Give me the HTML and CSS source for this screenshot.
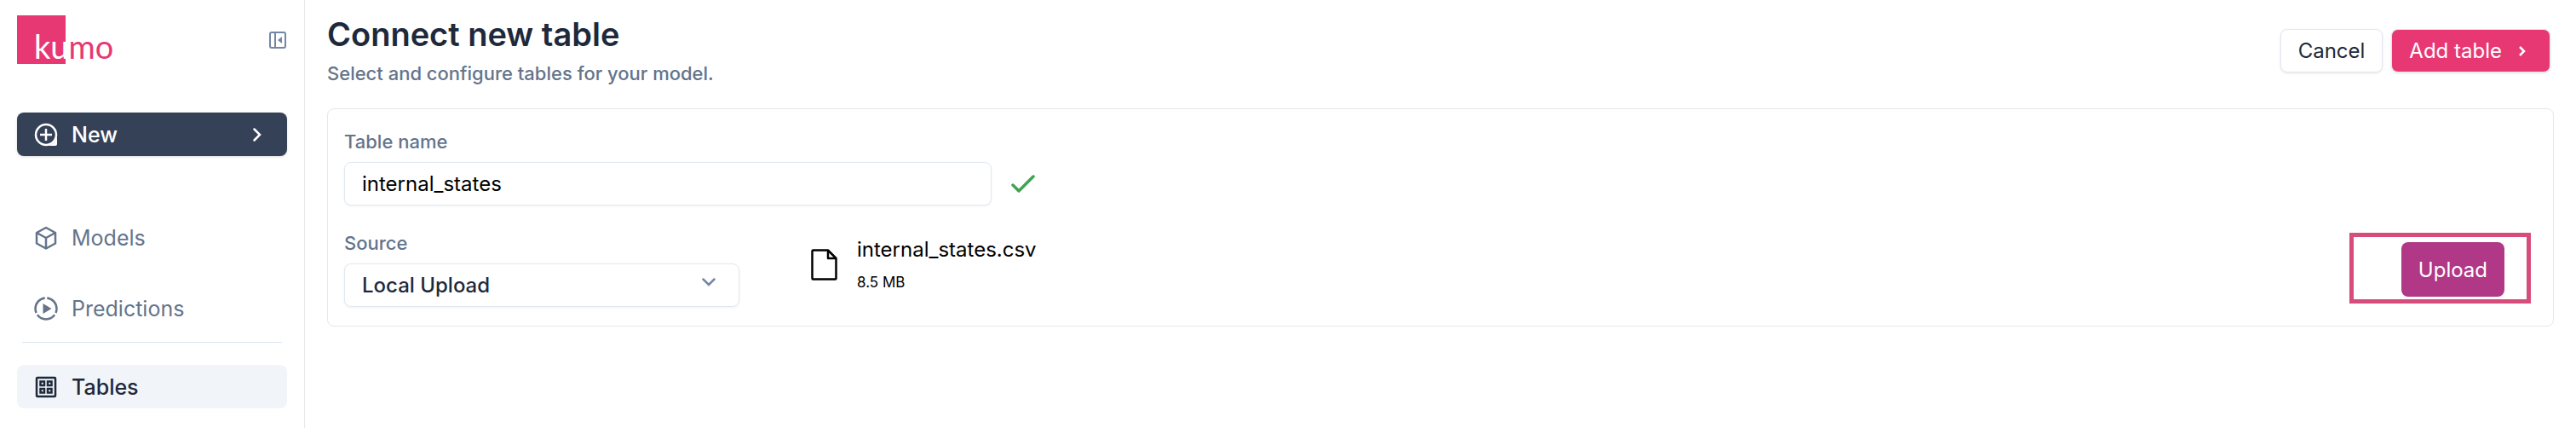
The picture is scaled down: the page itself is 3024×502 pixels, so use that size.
FILE: index.html
```html
<!DOCTYPE html>
<html lang="en">
<head>
  <meta charset="UTF-8">
  <title>Connect new table</title>
  <link rel="stylesheet" href="styles.css">
</head>
<body>
  <aside class="sidebar">
    <div class="brand">
      <svg class="logo" viewBox="0 0 120 57" role="img" aria-label="kumo">
        <rect width="57" height="57" fill="#e83873"/>
        <text class="logo-text" x="20" y="51"><tspan fill="#fff">ku</tspan><tspan fill="#e83873">mo</tspan></text>
      </svg>
      <button type="button" class="collapse" aria-label="Collapse sidebar">
        <svg width="20" height="20" viewBox="0 0 20 20" fill="none" stroke="#7486a5" stroke-width="2">
          <rect x="1" y="1" width="18" height="18" rx="2"/>
          <path d="M7 1v18"/>
          <path d="M15 6v8l-5-4z" fill="#7486a5" stroke="none"/>
        </svg>
      </button>
    </div>

    <button type="button" class="new-button">
      <svg class="nav-icon" viewBox="0 0 28 28" fill="none" stroke="#fff" stroke-width="2.5">
        <circle cx="14" cy="14" r="12"/>
        <path d="M27 14v11a2 2 0 0 1-2 2H14c7 0 13-6 13-13z" fill="#fff" stroke="none"/>
        <path d="M14 7v14M7 14h14"/>
      </svg>
      <span>New</span>
      <svg class="chevron" width="10" height="16" viewBox="0 0 10 16" fill="none" stroke="#fff" stroke-width="2.5">
        <path d="M1.500 1.500L8 8l-6.500 6.500" stroke-linecap="round"/>
      </svg>
    </button>

    <nav class="nav">
      <a href="#models" class="nav-link">
        <svg class="nav-icon" viewBox="0 0 28 28" fill="none" stroke="currentColor" stroke-width="2.5" stroke-linejoin="round">
          <path d="M14 2l11 6v12.500L14 26.500 3 20.500V8z"/>
          <path d="M3 8l11 6 11-6M14 14v12.500"/>
        </svg>
        Models
      </a>
      <a href="#predictions" class="nav-link">
        <svg class="nav-icon" viewBox="0 0 28 28" fill="none" stroke="currentColor" stroke-width="2.5">
          <circle cx="14" cy="14" r="12.500" pathLength="120" stroke-dasharray="36 4" stroke-dashoffset="-12"/>
          <path d="M10.500 8v12l10-6z" fill="currentColor" stroke="none"/>
        </svg>
        Predictions
      </a>
      <hr class="divider">
      <a href="#tables" class="nav-link active">
        <svg class="nav-icon" viewBox="0 0 28 28" fill="none" stroke="currentColor" stroke-width="2.5">
          <rect x="3" y="3" width="22" height="22" rx="1"/>
          <rect x="7.500" y="7.500" width="4.500" height="4.500"/>
          <rect x="16" y="7.500" width="4.500" height="4.500"/>
          <rect x="7.500" y="16" width="4.500" height="4.500"/>
          <rect x="16" y="16" width="4.500" height="4.500"/>
        </svg>
        Tables
      </a>
    </nav>
  </aside>

  <main class="main">
    <header class="header">
      <div>
        <h1>Connect new table</h1>
        <p class="subtitle">Select and configure tables for your model.</p>
      </div>
      <div class="actions">
        <button type="button" class="btn">Cancel</button>
        <button type="submit" form="table-form" class="btn primary">
          Add table
          <svg width="8" height="12" viewBox="0 0 8 12" fill="none" stroke="#fff" stroke-width="2.500">
            <path d="M1 1l5 5-5 5"/>
          </svg>
        </button>
      </div>
    </header>

    <form id="table-form" class="card">
      <div class="field">
        <label for="table-name">Table name</label>
        <div class="name-row">
          <input type="text" id="table-name" class="control" value="internal_states">
          <svg width="28" height="22" viewBox="0 0 28 22" fill="none" stroke="#40a44f" stroke-width="3.500">
            <path d="M2 12l7 7L26 2" stroke-linecap="round" stroke-linejoin="round"/>
          </svg>
        </div>
      </div>

      <div class="source-row">
        <div class="field">
          <label for="source">Source</label>
          <div class="select-wrap">
            <select id="source" class="control">
              <option>Local Upload</option>
            </select>
            <svg class="select-arrow" width="16" height="10" viewBox="0 0 16 10" fill="none" stroke="#7486a5" stroke-width="2.500">
              <path d="M1.500 1.500L8 8l6.500-6.500" stroke-linecap="round"/>
            </svg>
          </div>
        </div>
        <div class="file">
          <svg width="31" height="37" viewBox="0 0 31 37" fill="none" stroke="#000" stroke-width="2.500" stroke-linejoin="round">
            <path d="M2.500 1.500H20l9.500 9.500v23.500a1 1 0 0 1-1 1h-26a1 1 0 0 1-1-1v-32a1 1 0 0 1 1-1z"/>
            <path d="M20 1.500V11h9.500"/>
          </svg>
          <div>
            <div class="file-name">internal_states.csv</div>
            <div class="file-size">8.5 MB</div>
          </div>
        </div>
        <div class="upload-box">
          <button type="button" class="upload">Upload</button>
        </div>
      </div>
    </form>
  </main>
</body>
</html>
```
FILE: styles.css
```css
* {
  box-sizing: border-box;
}
body {
  margin: 0;
  min-height: 100vh;
  display: flex;
  font-family: Inter, "Liberation Sans", sans-serif;
  font-size: 24px;
  font-weight: 500;
  color: #1e293b;
  background: #fff;
}
button, input, select {
  font: inherit;
  color: inherit;
}
button {
  cursor: pointer;
}
.sidebar {
  width: 358px;
  flex-shrink: 0;
  padding: 18px 20px 0;
  border-right: 1px solid #e5e7eb;
}
.brand {
  display: flex;
  justify-content: space-between;
  align-items: center;
  padding-right: 1px;
  margin-bottom: 57px;
}
.logo {
  width: 120px;
  height: 57px;
}
.logo-text {
  font-family: Lato, sans-serif;
  font-size: 38px;
  font-weight: 400;
}
.collapse {
  display: flex;
  padding: 0;
  border: none;
  background: none;
}
.new-button {
  display: flex;
  align-items: center;
  gap: 16px;
  width: 100%;
  height: 51px;
  padding: 0 30px 0 20px;
  border: none;
  border-radius: 8px;
  background: #354157;
  color: #fff;
  font-size: 25px;
  box-shadow: 0 1px 3px rgba(0, 0, 0, 0.15);
}
.chevron {
  margin-left: auto;
}
.nav-icon {
  width: 28px;
  height: 28px;
  flex-shrink: 0;
}
.nav {
  margin-top: 70px;
  font-size: 25px;
}
.nav-link {
  display: flex;
  align-items: center;
  gap: 16px;
  height: 51px;
  margin-bottom: 32px;
  padding-left: 20px;
  border-radius: 8px;
  color: #64748b;
  font-weight: 400;
  text-decoration: none;
}
.nav-link.active {
  background: #f1f5f9;
  color: #1e293b;
  font-weight: 500;
}
.divider {
  height: 1px;
  margin: -18px 6px 26px;
  border: none;
  background: #dde6ee;
}
.main {
  flex: 1;
  padding: 16px 26px 0;
}
.header {
  display: flex;
  justify-content: space-between;
  height: 111px;
}
h1 {
  margin: 0;
  font-size: 38px;
  line-height: 48px;
  font-weight: 600;
}
.subtitle {
  margin: 6px 0 0;
  font-size: 22px;
  line-height: 32px;
  color: #64748b;
}
.actions {
  display: flex;
  align-items: flex-start;
  gap: 10px;
  padding: 18px 4px 0 0;
}
.btn {
  display: flex;
  align-items: center;
  gap: 20px;
  height: 51px;
  padding: 0 20px;
  border: 1px solid #e2e8f0;
  border-radius: 8px;
  background: #fff;
  font-weight: 400;
  box-shadow: 0 1px 3px rgba(0, 0, 0, 0.1);
}
.btn.primary {
  padding-right: 28px;
  background: #e83873;
  color: #fff;
}
.card {
  display: flex;
  flex-direction: column;
  gap: 28px;
  padding: 22px 26px 22px 19px;
  border: 1px solid #e5e7eb;
  border-radius: 8px;
}
label {
  display: block;
  margin-bottom: 8px;
  font-size: 22px;
  line-height: 32px;
  color: #64748b;
}
.control {
  width: 100%;
  height: 51px;
  padding: 0 20px;
  border: 1px solid #e2e8f0;
  border-radius: 8px;
  background: #fff;
  box-shadow: 0 1px 3px rgba(0, 0, 0, 0.06);
}
.name-row {
  display: flex;
  align-items: center;
  gap: 23px;
}
.name-row .control {
  width: 760px;
  font-weight: 400;
  color: #000;
}
.source-row {
  display: flex;
}
.select-wrap {
  position: relative;
  width: 464px;
}
.select-wrap .control {
  appearance: none;
}
.select-arrow {
  position: absolute;
  top: 17px;
  right: 28px;
  pointer-events: none;
}
.file {
  display: flex;
  align-items: center;
  gap: 23px;
  margin-left: 84px;
  padding-bottom: 8px;
  font-weight: 400;
  color: #000;
}
.file-name {
  line-height: 40px;
}
.file-size {
  font-size: 17px;
  line-height: 36px;
}
.upload-box {
  align-self: center;
  margin-left: auto;
  padding: 6px 26px 3px 56px;
  border: 5px solid #d64c7c;
}
.upload {
  display: block;
  height: 64px;
  padding: 0 20px;
  border: none;
  border-radius: 8px;
  background: #b13886;
  color: #fff;
  font-weight: 400;
}
```
